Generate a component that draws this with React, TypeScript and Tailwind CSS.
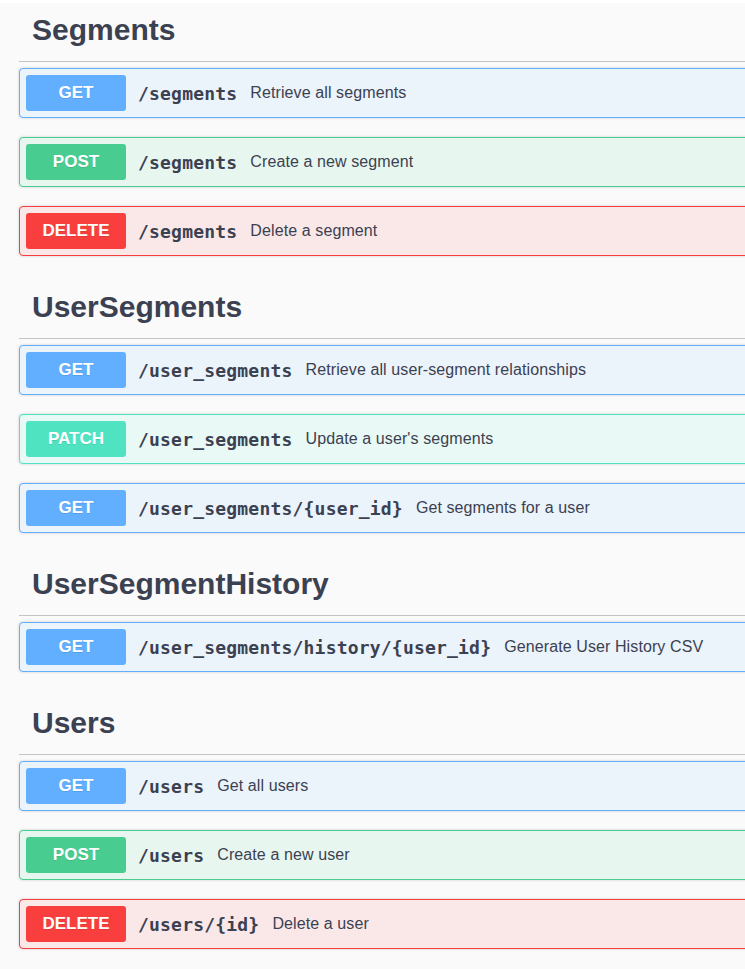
import React from "react";

type Method = "GET" | "POST" | "DELETE" | "PATCH";

const styles: Record<Method, { card: string; badge: string }> = {
  GET: { card: "bg-[#ebf3fb] border-[#61affe]", badge: "bg-[#61affe]" },
  POST: { card: "bg-[#e8f6f0] border-[#49cc90]", badge: "bg-[#49cc90]" },
  DELETE: { card: "bg-[#fae7e7] border-[#f93e3e]", badge: "bg-[#f93e3e]" },
  PATCH: { card: "bg-[#e9f9f5] border-[#50e3c2]", badge: "bg-[#50e3c2]" },
};

type Op = { method: Method; path: string; summary: string };

const sections: { name: string; ops: Op[] }[] = [
  {
    name: "Segments",
    ops: [
      { method: "GET", path: "/segments", summary: "Retrieve all segments" },
      { method: "POST", path: "/segments", summary: "Create a new segment" },
      { method: "DELETE", path: "/segments", summary: "Delete a segment" },
    ],
  },
  {
    name: "UserSegments",
    ops: [
      { method: "GET", path: "/user_segments", summary: "Retrieve all user-segment relationships" },
      { method: "PATCH", path: "/user_segments", summary: "Update a user's segments" },
      { method: "GET", path: "/user_segments/{user_id}", summary: "Get segments for a user" },
    ],
  },
  {
    name: "UserSegmentHistory",
    ops: [
      { method: "GET", path: "/user_segments/history/{user_id}", summary: "Generate User History CSV" },
    ],
  },
  {
    name: "Users",
    ops: [
      { method: "GET", path: "/users", summary: "Get all users" },
      { method: "POST", path: "/users", summary: "Create a new user" },
      { method: "DELETE", path: "/users/{id}", summary: "Delete a user" },
    ],
  },
];

function OpBlock({ op }: { op: Op }) {
  const s = styles[op.method];
  return (
    <div
      className={`flex h-[50px] items-center rounded-[4px] border px-[6px] shadow-[0_0_3px_rgba(0,0,0,0.19)] ${s.card}`}
    >
      <div
        className={`flex h-[36px] w-[100px] shrink-0 items-center justify-center rounded-[3px] text-[17px] font-bold text-white [text-shadow:0_1px_0_rgba(0,0,0,0.1)] ${s.badge}`}
        style={{ fontFamily: '"Liberation Sans", Arial, sans-serif' }}
      >
        {op.method}
      </div>
      <span
        className="ml-[12px] whitespace-nowrap text-[18px] font-bold tracking-[0.2px] text-[#3b4151]"
        style={{ fontFamily: '"DejaVu Sans Mono", monospace' }}
      >
        {op.path}
      </span>
      <span
        className="ml-[13px] whitespace-nowrap text-[16px] tracking-[0.1px] text-[#3b4151]"
        style={{ fontFamily: '"Liberation Sans", Arial, sans-serif' }}
      >
        {op.summary}
      </span>
    </div>
  );
}

export default function App() {
  return (
    <div
      className="min-h-screen w-full overflow-hidden bg-[#fafafa]"
      style={{ fontFamily: '"Liberation Sans", Arial, sans-serif' }}
    >
      <div className="h-[3px] bg-white" />
      <div className="w-[780px] pl-[19px]">
        {sections.map((sec, i) => (
          <div key={sec.name} className={i === 0 ? "" : "mt-[24px]"}>
            <h3 className="border-b border-[#c1c3c7] pb-[13px] pl-[13px] pt-[9px] text-[30px] font-bold leading-[36px] text-[#3b4151]">
              {sec.name}
            </h3>
            <div className="mt-[6px] flex flex-col gap-[19px]">
              {sec.ops.map((op, j) => (
                <OpBlock key={j} op={op} />
              ))}
            </div>
          </div>
        ))}
      </div>
    </div>
  );
}
